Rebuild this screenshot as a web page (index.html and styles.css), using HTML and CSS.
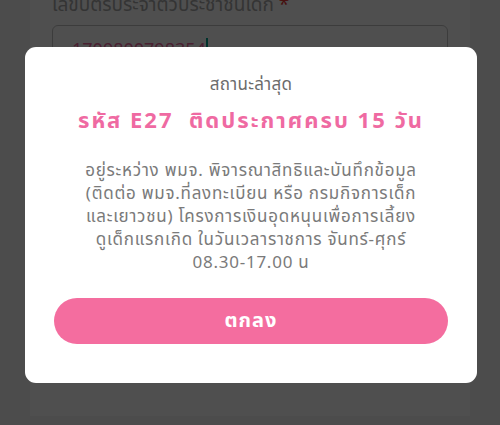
FILE: index.html
```html
<!DOCTYPE html>
<html lang="th">
<head>
    <meta charset="UTF-8">
    <meta name="viewport" content="width=device-width, initial-scale=1.0">
    <title>สถานะล่าสุด</title>
    <link rel="stylesheet" href="styles.css">
</head>
<body>
    <div class="page-card">
        <label class="field-label" for="child-id">เลขบัตรประจำตัวประชาชนเด็ก <span class="req">*</span></label>
        <div class="field-input">
            <span class="field-value">1709800798354</span><span class="caret"></span>
        </div>
    </div>

    <div class="overlay">
        <div class="dialog">
            <p class="dialog-caption">สถานะล่าสุด</p>
            <h1 class="dialog-title">รหัส E27&nbsp; ติดประกาศครบ 15 วัน</h1>
            <p class="dialog-text">
                อยู่ระหว่าง พมจ. พิจารณาสิทธิและบันทึกข้อมูล<br>
                (ติดต่อ พมจ.ที่ลงทะเบียน หรือ กรมกิจการเด็ก<br>
                และเยาวชน) โครงการเงินอุดหนุนเพื่อการเลี้ยง<br>
                ดูเด็กแรกเกิด ในวันเวลาราชการ จันทร์-ศุกร์<br>
                08.30-17.00 น
            </p>
            <button class="btn-ok">ตกลง</button>
        </div>
    </div>
</body>
</html>
```

FILE: styles.css
```css
body {
    margin: 0;
    padding: 0;
    height: 425px;
    overflow: hidden;
    background-color: #f4f4f4;
    font-family: "Noto Sans Thai", "Noto Sans", sans-serif;
}
.page-card {
    margin-left: 30px;
    margin-right: 30px;
    height: 425px;
    background-color: #ffffff;
    padding: 0 22px;
}
.field-label {
    display: block;
    margin-top: -9px;
    font-size: 19px;
    line-height: 30px;
    color: #a8a8a8;
}
.field-label .req {
    color: #e53935;
}
.field-input {
    margin-top: 4px;
    height: 48px;
    border: 1px solid #c2c2c2;
    border-radius: 6px;
    padding: 0 19px;
    display: flex;
    align-items: center;
}
.field-value {
    font-size: 18px;
    color: #ee6aa0;
}
.caret {
    width: 2px;
    height: 24px;
    background-color: #00a693;
}
.overlay {
    position: fixed;
    inset: 0;
    background-color: rgba(0, 0, 0, 0.69);
    display: flex;
    justify-content: center;
    align-items: center;
}
.dialog {
    width: 452px;
    margin-left: 2px;
    margin-top: 5px;
    box-sizing: border-box;
    background-color: #ffffff;
    border-radius: 11px;
    padding: 26px 29px 39px;
    text-align: center;
}
.dialog-caption {
    margin: 0;
    font-size: 17px;
    line-height: 24px;
    letter-spacing: 0.3px;
    color: #6b6b6b;
}
.dialog-title {
    margin: 10px 0 0;
    font-size: 22px;
    line-height: 30px;
    font-weight: 700;
    letter-spacing: 2px;
    color: #ef6aa2;
}
.dialog-text {
    margin: 23px 0 0;
    font-size: 17px;
    line-height: 23px;
    letter-spacing: 0.75px;
    white-space: nowrap;
    color: #7a7a7a;
}
.btn-ok {
    display: block;
    width: 100%;
    height: 46px;
    margin-top: 23px;
    border: none;
    border-radius: 23px;
    background-color: #f46d9f;
    color: #ffffff;
    font-family: inherit;
    font-size: 20px;
    font-weight: 700;
    letter-spacing: 1px;
    cursor: pointer;
}
```
